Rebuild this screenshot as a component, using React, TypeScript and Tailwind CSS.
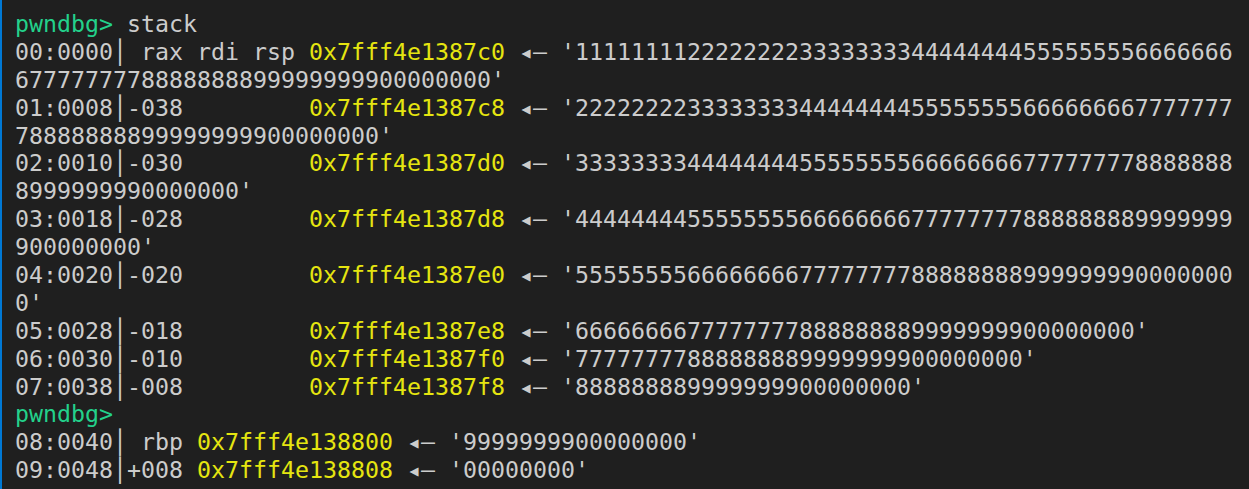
const yellow = "text-[#e5e510]";

type Row =
  | { kind: "prompt"; cmd?: string }
  | { kind: "entry"; idx: string; off: string; addr: string; str: string }
  | { kind: "cont"; str: string };

const rows: Row[] = [
  { kind: "prompt", cmd: "stack" },
  {
    kind: "entry",
    idx: "00:0000",
    off: " rax rdi rsp ",
    addr: "0x7fff4e1387c0",
    str: "'11111111222222223333333344444444555555556666666",
  },
  { kind: "cont", str: "6777777778888888899999999900000000'" },
  {
    kind: "entry",
    idx: "01:0008",
    off: "-038         ",
    addr: "0x7fff4e1387c8",
    str: "'22222222333333334444444455555555666666667777777",
  },
  { kind: "cont", str: "78888888899999999900000000'" },
  {
    kind: "entry",
    idx: "02:0010",
    off: "-030         ",
    addr: "0x7fff4e1387d0",
    str: "'33333333444444445555555566666666777777778888888",
  },
  { kind: "cont", str: "8999999990000000'" },
  {
    kind: "entry",
    idx: "03:0018",
    off: "-028         ",
    addr: "0x7fff4e1387d8",
    str: "'44444444555555556666666677777777888888889999999",
  },
  { kind: "cont", str: "900000000'" },
  {
    kind: "entry",
    idx: "04:0020",
    off: "-020         ",
    addr: "0x7fff4e1387e0",
    str: "'55555555666666667777777788888888999999990000000",
  },
  { kind: "cont", str: "0'" },
  {
    kind: "entry",
    idx: "05:0028",
    off: "-018         ",
    addr: "0x7fff4e1387e8",
    str: "'6666666677777777888888889999999900000000'",
  },
  {
    kind: "entry",
    idx: "06:0030",
    off: "-010         ",
    addr: "0x7fff4e1387f0",
    str: "'77777777888888889999999900000000'",
  },
  {
    kind: "entry",
    idx: "07:0038",
    off: "-008         ",
    addr: "0x7fff4e1387f8",
    str: "'888888889999999900000000'",
  },
  { kind: "prompt" },
  {
    kind: "entry",
    idx: "08:0040",
    off: " rbp ",
    addr: "0x7fff4e138800",
    str: "'9999999900000000'",
  },
  {
    kind: "entry",
    idx: "09:0048",
    off: "+008 ",
    addr: "0x7fff4e138808",
    str: "'00000000'",
  },
];

function Line({ row }: { row: Row }) {
  if (row.kind === "prompt") {
    return (
      <div className="h-[27.9px] whitespace-pre">
        <span className="text-[#23d18b]">pwndbg&gt;</span>
        {row.cmd ? " " + row.cmd : ""}
      </div>
    );
  }
  if (row.kind === "cont") {
    return <div className="h-[27.9px] whitespace-pre">{row.str}</div>;
  }
  return (
    <div className="h-[27.9px] whitespace-pre">
      {row.idx}│{row.off}
      <span className={yellow}>{row.addr}</span> ◂— {row.str}
    </div>
  );
}

export default function App() {
  return (
    <div className="flex h-[489px] w-[1249px] overflow-hidden bg-[#1f1f1f]">
      <div className="w-[2px] shrink-0 bg-[#0078d4]" />
      <div className="pl-[13px] pt-[10px] font-['DejaVu_Sans_Mono',monospace] text-[23.25px] leading-[27.9px] text-[#cccccc]">
        {rows.map((row, i) => (
          <Line key={i} row={row} />
        ))}
      </div>
    </div>
  );
}
